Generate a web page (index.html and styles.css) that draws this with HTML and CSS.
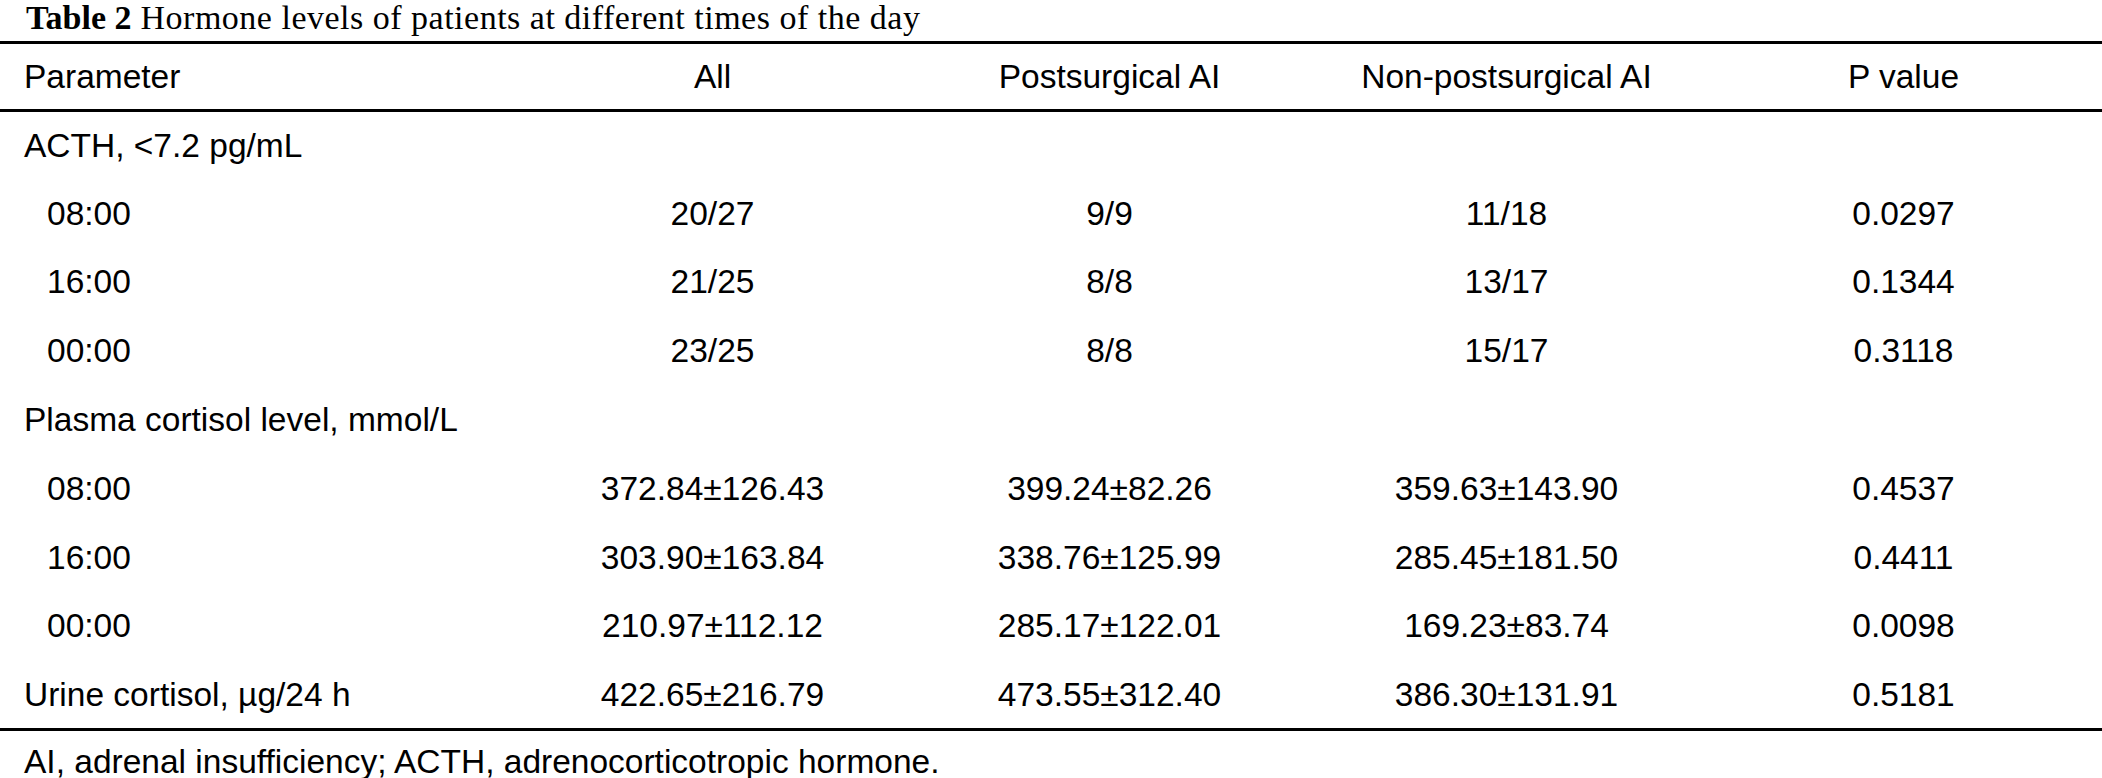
FILE: index.html
```html
<!DOCTYPE html>
<html lang="en">
<head>
<meta charset="utf-8">
<title>Table 2 Hormone levels</title>
<link rel="stylesheet" href="styles.css">
</head>
<body>
<div class="caption"><b>Table 2</b> Hormone levels of patients at different times of the day</div>
<table class="data">
  <colgroup>
    <col class="c-param">
    <col class="c-val">
    <col class="c-val">
    <col class="c-val">
    <col class="c-val">
  </colgroup>
  <thead>
    <tr>
      <th class="param">Parameter</th>
      <th>All</th>
      <th>Postsurgical AI</th>
      <th>Non-postsurgical AI</th>
      <th>P value</th>
    </tr>
  </thead>
  <tbody>
    <tr><td class="param">ACTH, &lt;7.2 pg/mL</td><td></td><td></td><td></td><td></td></tr>
    <tr><td class="param sub">08:00</td><td>20/27</td><td>9/9</td><td>11/18</td><td>0.0297</td></tr>
    <tr><td class="param sub">16:00</td><td>21/25</td><td>8/8</td><td>13/17</td><td>0.1344</td></tr>
    <tr><td class="param sub">00:00</td><td>23/25</td><td>8/8</td><td>15/17</td><td>0.3118</td></tr>
    <tr><td class="param">Plasma cortisol level, mmol/L</td><td></td><td></td><td></td><td></td></tr>
    <tr><td class="param sub">08:00</td><td>372.84±126.43</td><td>399.24±82.26</td><td>359.63±143.90</td><td>0.4537</td></tr>
    <tr><td class="param sub">16:00</td><td>303.90±163.84</td><td>338.76±125.99</td><td>285.45±181.50</td><td>0.4411</td></tr>
    <tr><td class="param sub">00:00</td><td>210.97±112.12</td><td>285.17±122.01</td><td>169.23±83.74</td><td>0.0098</td></tr>
    <tr><td class="param">Urine cortisol, µg/24 h</td><td>422.65±216.79</td><td>473.55±312.40</td><td>386.30±131.91</td><td>0.5181</td></tr>
  </tbody>
</table>
<div class="note">AI, adrenal insufficiency; ACTH, adrenocorticotropic hormone.</div>
</body>
</html>
```

FILE: styles.css
```css
html, body {
  margin: 0;
  padding: 0;
  background: #ffffff;
  color: #000000;
}

body {
  width: 2102px;
  font-family: "Liberation Sans", Arial, sans-serif;
}

.caption {
  height: 41px;
  padding-left: 26px;
  font-family: "Liberation Serif", "Times New Roman", serif;
  font-size: 34px;
  letter-spacing: 0.5px;
  line-height: 35px;
  white-space: nowrap;
}

.caption b {
  font-weight: bold;
  letter-spacing: 0;
}

.data {
  width: 2102px;
  border-collapse: collapse;
  table-layout: fixed;
  font-size: 33.5px;
  border-top: 3px solid #000;
  border-bottom: 3px solid #000;
}

.c-param {
  width: 514px;
}

.c-val {
  width: 397px;
}

.data th,
.data td {
  padding: 0;
  font-weight: normal;
  text-align: center;
  vertical-align: middle;
  white-space: nowrap;
}

.data thead tr {
  height: 68px;
  border-bottom: 3px solid #000;
}

.data tbody tr {
  height: 68.8px;
}

.data .param {
  text-align: left;
  padding-left: 24px;
}

.data .sub {
  padding-left: 47px;
}

.note {
  padding-left: 24px;
  padding-top: 13px;
  font-size: 33.5px;
  line-height: 36px;
  white-space: nowrap;
}
```
